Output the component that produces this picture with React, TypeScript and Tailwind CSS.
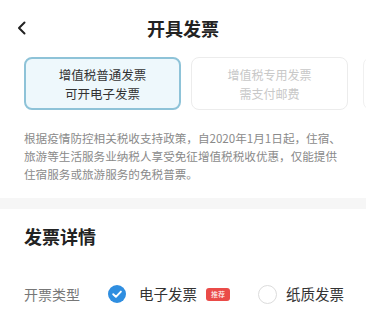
import React from 'react';

const CheckedIcon = () => (
  <svg width="18" height="18" viewBox="0 0 18 18" className="shrink-0">
    <circle cx="9" cy="9" r="9" fill="#2f8ee0" />
    <path d="M5.2 9.2 L7.9 11.8 L12.9 6.6" fill="none" stroke="#fff" strokeWidth="1.9" strokeLinecap="round" strokeLinejoin="round" />
  </svg>
);

const App: React.FC = () => {
  return (
    <div
      className="w-[366px] h-[311px] overflow-hidden bg-white text-[#333]"
      style={{ fontFamily: '"Noto Sans CJK SC", "Noto Sans", sans-serif' }}
    >
      <div className="relative h-[56px] flex items-center justify-center">
        <svg className="absolute left-[16px] top-[21px]" width="12" height="14" viewBox="0 0 12 14">
          <path d="M8.5 1.5 L3 7 L8.5 12.5" fill="none" stroke="#222" strokeWidth="2" strokeLinecap="round" strokeLinejoin="round" />
        </svg>
        <h1 className="text-[18px] font-bold leading-none text-[#222]">开具发票</h1>
      </div>

      <div className="mt-[1px] flex gap-[10px] pl-[24px]">
        <div className="w-[157px] h-[53px] shrink-0 rounded-[8px] border-2 border-[#8ec3d8] bg-[#eef8fc] flex flex-col items-center justify-center text-[12.5px] leading-[19px] text-[#333]">
          <span>增值税普通发票</span>
          <span>可开电子发票</span>
        </div>
        <div className="w-[157px] h-[53px] shrink-0 rounded-[8px] border border-[#ececec] bg-white flex flex-col items-center justify-center text-[12px] leading-[19px] text-[#c8c8c8]">
          <span>增值税专用发票</span>
          <span>需支付邮费</span>
        </div>
        <div className="ml-[5px] w-[157px] h-[53px] shrink-0 rounded-[8px] border border-[#f0f0f0] bg-white" />
      </div>

      <div className="mt-[19px] px-[24px] text-[11.6px] leading-[18px] text-[#8a8a8a]">
        <p className="whitespace-nowrap">根据疫情防控相关税收支持政策，自2020年1月1日起，住宿、</p>
        <p className="whitespace-nowrap">旅游等生活服务业纳税人享受免征增值税税收优惠，仅能提供</p>
        <p className="whitespace-nowrap">住宿服务或旅游服务的免税普票。</p>
      </div>

      <div className="mt-[15px] h-[11px] bg-[#f6f6f6]" />

      <div className="px-[24px]">
        <h2 className="mt-[14px] text-[18px] font-bold leading-[26px] text-[#222]">发票详情</h2>
        <div className="mt-[33px] flex items-center h-[24px] whitespace-nowrap">
          <span className="w-[84px] shrink-0 text-[14px] text-[#777]">开票类型</span>
          <CheckedIcon />
          <span className="ml-[13px] shrink-0 text-[14.5px] text-[#333]">电子发票</span>
          <span className="ml-[9px] h-[13px] w-[24px] shrink-0 rounded-[3px] bg-[#ea4b48] flex items-center justify-center text-[7px] leading-none text-white">推荐</span>
          <span className="ml-[28px] w-[19px] h-[19px] shrink-0 rounded-full border border-[#dcdcdc] bg-white" />
          <span className="ml-[9px] shrink-0 text-[14.5px] text-[#333]">纸质发票</span>
        </div>
      </div>
    </div>
  );
};

export default App;
